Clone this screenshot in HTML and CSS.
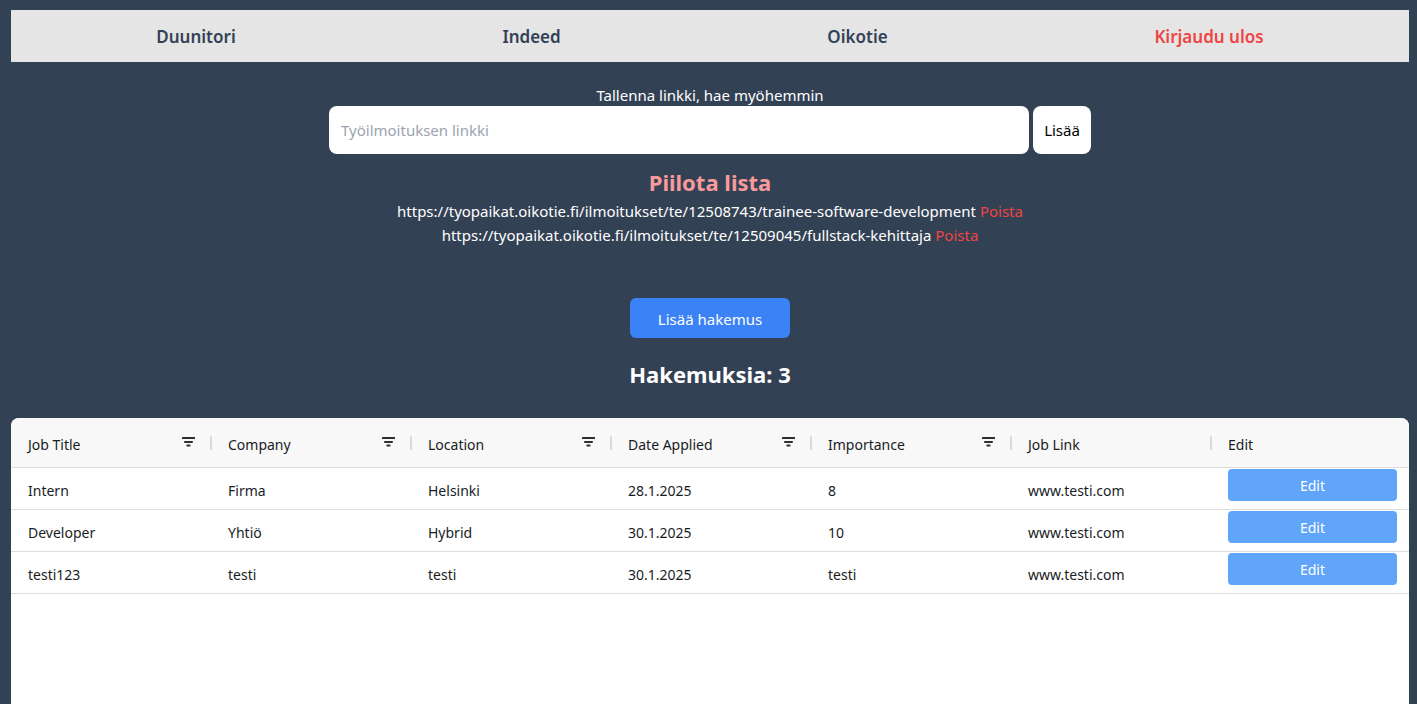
FILE: index.html
```html
<!DOCTYPE html>
<html lang="fi">
<head>
<meta charset="utf-8">
<title>Hakemukset</title>
<link rel="stylesheet" href="styles.css">
</head>
<body>
<div class="page">
  <nav class="nav">
    <a class="nav-link">Duunitori</a>
    <a class="nav-link">Indeed</a>
    <a class="nav-link">Oikotie</a>
    <a class="nav-link logout">Kirjaudu ulos</a>
  </nav>

  <section class="save">
    <p class="save-label">Tallenna linkki, hae myöhemmin</p>
    <div class="save-row">
      <input class="save-input" type="text" placeholder="Työilmoituksen linkki">
      <button class="save-btn">Lisää</button>
    </div>
    <h2 class="toggle">Piilota lista</h2>
    <ul class="links">
      <li>https://tyopaikat.oikotie.fi/ilmoitukset/te/12508743/trainee-software-development <span class="remove">Poista</span></li>
      <li>https://tyopaikat.oikotie.fi/ilmoitukset/te/12509045/fullstack-kehittaja <span class="remove">Poista</span></li>
    </ul>
  </section>

  <div class="actions">
    <button class="add-btn">Lisää hakemus</button>
    <h2 class="count">Hakemuksia: 3</h2>
  </div>

  <div class="grid">
    <div class="grid-row header">
      <div class="cell hcell"><span>Job Title</span><svg class="filter" viewBox="0 0 14 10"><rect x="0" y="0" width="13" height="2" rx="0.5"/><rect x="2.2" y="4" width="8.6" height="2" rx="0.5"/><rect x="4.5" y="7.6" width="4" height="1.8" rx="0.5"/></svg><i class="sep"></i></div>
      <div class="cell hcell"><span>Company</span><svg class="filter" viewBox="0 0 14 10"><rect x="0" y="0" width="13" height="2" rx="0.5"/><rect x="2.2" y="4" width="8.6" height="2" rx="0.5"/><rect x="4.5" y="7.6" width="4" height="1.8" rx="0.5"/></svg><i class="sep"></i></div>
      <div class="cell hcell"><span>Location</span><svg class="filter" viewBox="0 0 14 10"><rect x="0" y="0" width="13" height="2" rx="0.5"/><rect x="2.2" y="4" width="8.6" height="2" rx="0.5"/><rect x="4.5" y="7.6" width="4" height="1.8" rx="0.5"/></svg><i class="sep"></i></div>
      <div class="cell hcell"><span>Date Applied</span><svg class="filter" viewBox="0 0 14 10"><rect x="0" y="0" width="13" height="2" rx="0.5"/><rect x="2.2" y="4" width="8.6" height="2" rx="0.5"/><rect x="4.5" y="7.6" width="4" height="1.8" rx="0.5"/></svg><i class="sep"></i></div>
      <div class="cell hcell"><span>Importance</span><svg class="filter" viewBox="0 0 14 10"><rect x="0" y="0" width="13" height="2" rx="0.5"/><rect x="2.2" y="4" width="8.6" height="2" rx="0.5"/><rect x="4.5" y="7.6" width="4" height="1.8" rx="0.5"/></svg><i class="sep"></i></div>
      <div class="cell hcell"><span>Job Link</span><i class="sep"></i></div>
      <div class="cell hcell"><span>Edit</span></div>
    </div>

    <div class="grid-row">
      <div class="cell">Intern</div>
      <div class="cell">Firma</div>
      <div class="cell">Helsinki</div>
      <div class="cell">28.1.2025</div>
      <div class="cell">8</div>
      <div class="cell">www.testi.com</div>
      <div class="cell btn-cell"><button class="edit-btn">Edit</button></div>
    </div>
    <div class="grid-row">
      <div class="cell">Developer</div>
      <div class="cell">Yhtiö</div>
      <div class="cell">Hybrid</div>
      <div class="cell">30.1.2025</div>
      <div class="cell">10</div>
      <div class="cell">www.testi.com</div>
      <div class="cell btn-cell"><button class="edit-btn">Edit</button></div>
    </div>
    <div class="grid-row">
      <div class="cell">testi123</div>
      <div class="cell">testi</div>
      <div class="cell">testi</div>
      <div class="cell">30.1.2025</div>
      <div class="cell">testi</div>
      <div class="cell">www.testi.com</div>
      <div class="cell btn-cell"><button class="edit-btn">Edit</button></div>
    </div>
    <div class="grid-fill"></div>
  </div>
</div>
</body>
</html>
```

FILE: styles.css
```css
* { box-sizing: border-box; }

html, body {
  margin: 0;
  padding: 0;
  height: 100%;
  background: #334155;
  font-family: "Noto Sans", "Open Sans", sans-serif;
  overflow: hidden;
}

.page {
  padding: 10px 8px 0 11px;
  display: flex;
  flex-direction: column;
  min-height: 100%;
}

.nav {
  height: 52px;
  background: #e5e5e5;
  display: flex;
  align-items: center;
  justify-content: space-around;
  padding: 0 12px;
}

.nav-link {
  font-size: 17px;
  font-weight: 600;
  color: #334155;
  cursor: pointer;
}

.nav-link.logout { color: #ef4444; }

.save {
  display: flex;
  flex-direction: column;
  align-items: center;
  color: #fff;
}

.save-label {
  margin: 23px 0 0;
  font-size: 15px;
  line-height: 20px;
}

.save-row {
  margin-top: 1px;
  display: flex;
  gap: 4px;
}

.save-input {
  width: 700px;
  height: 48px;
  border: none;
  border-radius: 8px;
  padding: 0 12px;
  font-family: inherit;
  font-size: 15px;
  color: #111;
  background: #fff;
  outline: none;
}

.save-input::placeholder { color: #9ca3af; }

.save-btn {
  width: 58px;
  height: 48px;
  border: none;
  border-radius: 8px;
  background: #fff;
  font-family: inherit;
  font-size: 15px;
  color: #000;
  padding: 0;
}

.toggle {
  margin: 14px 0 0;
  font-size: 22px;
  line-height: 28px;
  font-weight: 700;
  color: #f89a9a;
}

.links {
  list-style: none;
  margin: 3px 0 0;
  padding: 0;
  text-align: center;
  font-size: 15px;
  line-height: 24px;
}

.remove { color: #ef4444; }

.actions {
  display: flex;
  flex-direction: column;
  align-items: center;
}

.add-btn {
  margin-top: 51px;
  width: 160px;
  height: 40px;
  border: none;
  border-radius: 6px;
  background: #3b82f6;
  color: #fff;
  font-family: inherit;
  font-size: 15px;
  padding: 2px 0 0;
}

.count {
  margin: 22px 0 0;
  font-size: 22px;
  line-height: 28px;
  font-weight: 700;
  color: #fff;
}

.grid {
  margin-top: 30px;
  flex: 1;
  background: #fff;
  border-radius: 8px 8px 0 0;
  display: flex;
  flex-direction: column;
  overflow: hidden;
  color: #181d1f;
  font-size: 14px;
}

.grid-row {
  display: grid;
  grid-template-columns: repeat(6, 200px) 1fr;
  height: 42px;
  border-bottom: 1px solid #dddddd;
}

.grid-row.header {
  height: 50px;
  background: #f8f8f8;
}

.cell {
  padding: 3px 17px 0;
  display: flex;
  align-items: center;
  position: relative;
}

.hcell { font-weight: 400; }

.hcell span { flex: 1; }

.filter {
  width: 14px;
  height: 10px;
  fill: #2a2f33;
  margin-right: -2px;
  margin-top: -4px;
}

.sep {
  position: absolute;
  right: -1px;
  top: 18px;
  width: 2px;
  height: 14px;
  background: #dadada;
}

.btn-cell {
  align-items: flex-start;
  padding: 1px 12px 0 17px;
}

.edit-btn {
  width: 100%;
  height: 32px;
  border: none;
  border-radius: 4px;
  background: #60a5fa;
  color: #fff;
  font-family: inherit;
  font-size: 14px;
  padding: 0;
}

.grid-fill { flex: 1; }
```
